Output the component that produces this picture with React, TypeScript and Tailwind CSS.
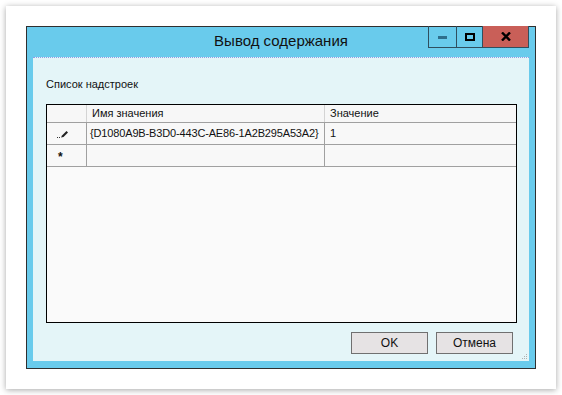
import React from 'react'

const rows = [
  { name: '{D1080A9B-B3D0-443C-AE86-1A2B295A53A2}', value: '1', editing: true },
  { name: '', value: '', editing: false, isNew: true },
]

function Pencil(): JSX.Element {
  return (
    <svg width="12" height="10" viewBox="0 0 12 10" aria-hidden>
      <rect x="0" y="8" width="1" height="1" fill="#333" />
      <rect x="2" y="8" width="1" height="1" fill="#333" />
      <path d="M4 8.5 L5 6.5 L9.5 2 L11 3.5 L6.5 8 Z" fill="#222" />
    </svg>
  )
}

export default function App(): JSX.Element {
  return (
    <div
      className="h-[395px] w-[562px] bg-white p-[6px]"
      style={{ fontFamily: '"Liberation Sans", Arial, sans-serif' }}
    >
      <div className="h-[383px] w-[550px] bg-white p-[20px] shadow-[0_1px_6px_rgba(0,0,0,0.35)]">
        {/* окно */}
        <div className="flex h-[343px] w-[510px] flex-col border border-[#2f2f2f] bg-[#69cbec]">
          <div className="relative flex h-[30px] shrink-0 items-center justify-center">
            <span className="pb-[2px] text-[15px] text-[#111]">Вывод содержания</span>
            <div className="absolute right-[6px] top-[-1px] flex h-[22px] border-x border-b border-[#2f4f5f]">
              <div className="flex w-[28px] items-center justify-center border-r border-[#2f4f5f]">
                <span className="mt-[2px] block h-[3px] w-[9px] bg-[#2e6e8c]" />
              </div>
              <div className="flex w-[26px] items-center justify-center border-r border-[#2f4f5f]">
                <span className="block h-[8px] w-[10px] border-2 border-black" />
              </div>
              <div className="flex w-[45px] items-center justify-center bg-[#c95f58]">
                <svg width="10" height="9" viewBox="0 0 10 9" aria-hidden>
                  <path d="M1 0.5 L9 8.5 M9 0.5 L1 8.5" stroke="#000" strokeWidth="2.4" />
                </svg>
              </div>
            </div>
          </div>

          <div className="mx-[6px] mb-[7px] flex flex-1 flex-col border-t border-dotted border-[#8f9ee6] bg-[#e4f5f8] pl-[13px] pr-[12px]">
            <div className="pt-[19px] text-[11px] leading-[14px] text-[#111]">Список надстроек</div>

            <div className="mt-[13px] flex h-[219px] flex-col border border-black bg-[#fafafa] text-[11px] text-[#111]">
              <div className="flex h-[18px] border-b border-[#a0a0a0] bg-[#f7f7f7]">
                <div className="w-[40px] border-r border-[#d4d4d4]" />
                <div className="flex w-[238px] items-center border-r border-[#d4d4d4] pl-[5px]">Имя значения</div>
                <div className="flex flex-1 items-center pl-[5px]">Значение</div>
              </div>
              {rows.map((r, i) => (
                <div key={i} className="flex h-[22px] border-b border-[#a0a0a0] bg-[#f8f8f8]">
                  <div className="flex w-[40px] items-center border-r border-[#a0a0a0] pl-[10px]">
                    {r.editing ? <Pencil /> : <span className="pl-[1px] pt-[3px] text-[12px] font-bold">*</span>}
                  </div>
                  <div className="flex w-[238px] items-center border-r border-[#a0a0a0] pl-[3px] tracking-[-0.15px]">
                    {r.name}
                  </div>
                  <div className="flex flex-1 items-center pl-[5px]">{r.value}</div>
                </div>
              ))}
            </div>

            <div className="mt-[9px] flex justify-end gap-[8px] pr-[4px]">
              <button
                type="button"
                className="h-[22px] w-[77px] border border-[#707070] bg-[#e6e3e4] text-[12px] text-[#111]"
              >
                OK
              </button>
              <button
                type="button"
                className="h-[22px] w-[77px] border border-[#707070] bg-[#e6e3e4] text-[12px] text-[#111]"
              >
                Отмена
              </button>
            </div>
            <div className="flex flex-1 items-end justify-end pb-[1px]">
              <svg width="6" height="6" viewBox="0 0 6 6" aria-hidden className="mr-[-11px]">
                <rect x="4" y="0" width="1" height="1" fill="#b0b0b0" />
                <rect x="2" y="2" width="1" height="1" fill="#b0b0b0" />
                <rect x="4" y="2" width="1" height="1" fill="#b0b0b0" />
                <rect x="0" y="4" width="1" height="1" fill="#b0b0b0" />
                <rect x="2" y="4" width="1" height="1" fill="#b0b0b0" />
                <rect x="4" y="4" width="1" height="1" fill="#b0b0b0" />
              </svg>
            </div>
          </div>
        </div>
      </div>
    </div>
  )
}
